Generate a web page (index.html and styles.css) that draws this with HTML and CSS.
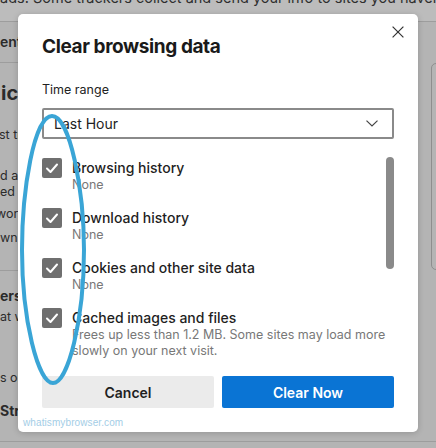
FILE: index.html
```html
<!DOCTYPE html>
<html lang="en">
<head>
<meta charset="utf-8">
<title>Clear browsing data</title>
<link rel="stylesheet" href="styles.css">
</head>
<body>
<div class="page">
  <div class="bg-top">ads. Some trackers collect and send your info to sites you haven't visited.</div>
  <div class="bg-body">
    <div class="bg-left">
      <div class="bg-tab">ent</div>
      <div class="bg-h">ic</div>
      <div class="bg-t t1">st tracking</div>
      <div class="bg-t t2">d and</div>
      <div class="bg-t">ed</div>
      <div class="bg-t t3">work</div>
      <div class="bg-t t4">wn</div>
      <div class="bg-rule"></div>
      <div class="bg-b b1">ers</div>
      <div class="bg-t t5">at we</div>
      <div class="bg-t t6">s on</div>
      <div class="bg-b b2">Strict</div>
    </div>
    <div class="bg-right"><div class="bg-card"></div></div>
  </div>
</div>

<div class="dialog" role="dialog">
  <div class="dlg-head">
    <h1 class="dlg-title">Clear browsing data</h1>
    <button class="dlg-close" aria-label="Close">
      <svg width="12" height="12" viewBox="0 0 12 12"><path d="M0.6 0.6 L11.4 11.4 M11.4 0.6 L0.6 11.4" stroke="#333" stroke-width="1.2" fill="none"/></svg>
    </button>
  </div>
  <div class="dlg-body">
    <div class="field-label">Time range</div>
    <div class="select">
      <span>Last Hour</span>
      <svg width="12" height="7" viewBox="0 0 12 7"><path d="M0.5 0.6 L6 6 L11.5 0.6" stroke="#444" stroke-width="1.2" fill="none"/></svg>
    </div>
    <div class="list">
      <div class="items">
        <div class="item">
          <span class="cb"><svg width="20" height="20" viewBox="0 0 20 20"><path d="M5 10.5 L8.5 14 L15 6.5" stroke="#fff" stroke-width="2" fill="none" stroke-linecap="round" stroke-linejoin="round"/></svg></span>
          <div class="item-text"><div class="item-title">Browsing history</div><div class="item-sub">None</div></div>
        </div>
        <div class="item">
          <span class="cb"><svg width="20" height="20" viewBox="0 0 20 20"><path d="M5 10.5 L8.5 14 L15 6.5" stroke="#fff" stroke-width="2" fill="none" stroke-linecap="round" stroke-linejoin="round"/></svg></span>
          <div class="item-text"><div class="item-title">Download history</div><div class="item-sub">None</div></div>
        </div>
        <div class="item">
          <span class="cb"><svg width="20" height="20" viewBox="0 0 20 20"><path d="M5 10.5 L8.5 14 L15 6.5" stroke="#fff" stroke-width="2" fill="none" stroke-linecap="round" stroke-linejoin="round"/></svg></span>
          <div class="item-text"><div class="item-title">Cookies and other site data</div><div class="item-sub">None</div></div>
        </div>
        <div class="item">
          <span class="cb"><svg width="20" height="20" viewBox="0 0 20 20"><path d="M5 10.5 L8.5 14 L15 6.5" stroke="#fff" stroke-width="2" fill="none" stroke-linecap="round" stroke-linejoin="round"/></svg></span>
          <div class="item-text"><div class="item-title">Cached images and files</div><div class="item-sub">Frees up less than 1.2 MB. Some sites may load more slowly on your next visit.</div></div>
        </div>
      </div>
      <div class="scroll-track"><div class="scroll-thumb"></div></div>
    </div>
    <div class="actions">
      <button class="btn btn-cancel">Cancel</button>
      <button class="btn btn-primary">Clear Now</button>
    </div>
  </div>
  <div class="watermark">whatismybrowser.com</div>
</div>

<svg class="annotation" width="436" height="448" viewBox="0 0 436 448">
  <path d="M52 116 C70 116 84 190 84 250 C84 320 68 383 53 383 C38 383 22 320 22 250 C22 190 34 116 52 116 Z" stroke="#3aa5d6" stroke-width="4" fill="none"/>
</svg>
</body>
</html>
```

FILE: styles.css
```css
html, body {
  margin: 0;
  padding: 0;
}
body {
  width: 436px;
  height: 448px;
  overflow: hidden;
  position: relative;
  background: #b4b4b4;
  font-family: Inter, "Liberation Sans", sans-serif;
}

/* dimmed page behind the dialog */
.page {
  display: flex;
  flex-direction: column;
}
.bg-top {
  margin-top: -12px;
  height: 33px;
  line-height: 20px;
  font-size: 14.5px;
  color: #2e2e2e;
  background: #bcbcbc;
  border-bottom: 1px solid #9d9d9d;
  white-space: nowrap;
  overflow: hidden;
}
.bg-body {
  display: flex;
  justify-content: space-between;
  height: 419px;
  border-bottom: 1px solid #9d9d9d;
}
.bg-left {
  width: 18px;
  white-space: nowrap;
  color: #2b2b2b;
}
.bg-tab {
  height: 40px;
  line-height: 40px;
  font-size: 14px;
  font-weight: 600;
  border-bottom: 1px solid #9d9d9d;
}
.bg-h {
  margin-top: 18px;
  font-size: 20px;
  font-weight: 700;
  line-height: 24px;
  padding-left: 1px;
}
.bg-t {
  font-size: 12.5px;
  line-height: 16px;
}
.bg-b {
  font-size: 14px;
  font-weight: 700;
  line-height: 18px;
}
.t1 { margin-top: 22px; margin-left: -1px; }
.t2 { margin-top: 25px; }
.t3 { margin-top: 6px; margin-left: -4px; }
.t4 { margin-top: 8px; }
.bg-rule {
  margin-top: 24px;
  border-top: 1px solid #9d9d9d;
}
.b1 { margin-top: 16px; }
.t5 { margin-top: 4px; }
.t6 { margin-top: 45px; }
.b2 { margin-top: 16px; }
.bg-right {
  width: 5px;
}
.bg-card {
  margin-top: 41px;
  width: 30px;
  height: 205px;
  border: 1px solid #8e8e8e;
  border-radius: 5px;
}

/* dialog */
.dialog {
  position: absolute;
  left: 18px;
  top: 14px;
  width: 400px;
  height: 418px;
  background: #fff;
  border-radius: 5px;
  box-shadow: 0 1px 6px rgba(0, 0, 0, 0.18);
}
.dlg-head {
  display: flex;
  justify-content: space-between;
  align-items: flex-start;
  padding: 21px 14px 0 24px;
}
.dlg-title {
  margin: 0;
  font-size: 19px;
  font-weight: 700;
  line-height: 24px;
  letter-spacing: -0.4px;
  color: #1a1a1a;
}
.dlg-close {
  margin-top: -9px;
  width: 12px;
  height: 12px;
  padding: 0;
  border: none;
  background: none;
  display: block;
}
.dlg-close svg {
  display: block;
}
.dlg-body {
  padding: 0 24px;
}
.field-label {
  margin-top: 23px;
  font-size: 12.5px;
  line-height: 16px;
  color: #222;
}
.select {
  margin-top: 10px;
  height: 31px;
  box-sizing: border-box;
  border: 2px solid #8a8a8a;
  border-radius: 2px;
  display: flex;
  align-items: center;
  justify-content: space-between;
  padding: 0 14px 0 10px;
  font-size: 14px;
  color: #222;
}
.select svg {
  display: block;
}
.list {
  margin-top: 18px;
  display: flex;
  align-items: flex-start;
}
.items {
  flex: 1;
  padding-top: 1px;
  display: flex;
  flex-direction: column;
  gap: 15px;
}
.item {
  display: flex;
  gap: 10px;
  align-items: flex-start;
}
.cb {
  flex: none;
  display: block;
  width: 20px;
  height: 20px;
  border-radius: 2px;
  background: #6f6f6f;
}
.cb svg {
  display: block;
}
.item-text {
  padding-top: 1px;
}
.item-title {
  font-size: 14px;
  font-weight: 500;
  line-height: 18px;
  color: #1f1f1f;
}
.item-sub {
  font-size: 12.5px;
  line-height: 16px;
  color: #787878;
}
.scroll-track {
  flex: none;
  width: 8px;
}
.scroll-thumb {
  height: 112px;
  border-radius: 4px;
  background: #8a8a8a;
}
.actions {
  margin-top: 17px;
  display: flex;
  gap: 8px;
}
.btn {
  flex: 1;
  height: 32px;
  border: none;
  border-radius: 2px;
  font-family: Inter, "Liberation Sans", sans-serif;
  font-size: 14px;
  font-weight: 600;
}
.btn-cancel {
  background: #ebebeb;
  color: #1f1f1f;
}
.btn-primary {
  background: #0a74d4;
  color: #fff;
}
.watermark {
  position: absolute;
  left: 5px;
  top: 403px;
  font-family: "Liberation Sans", sans-serif;
  font-size: 10px;
  line-height: 12px;
  color: #a3cde6;
  letter-spacing: 0.1px;
}

.annotation {
  position: absolute;
  left: 0;
  top: 0;
  pointer-events: none;
}
```
